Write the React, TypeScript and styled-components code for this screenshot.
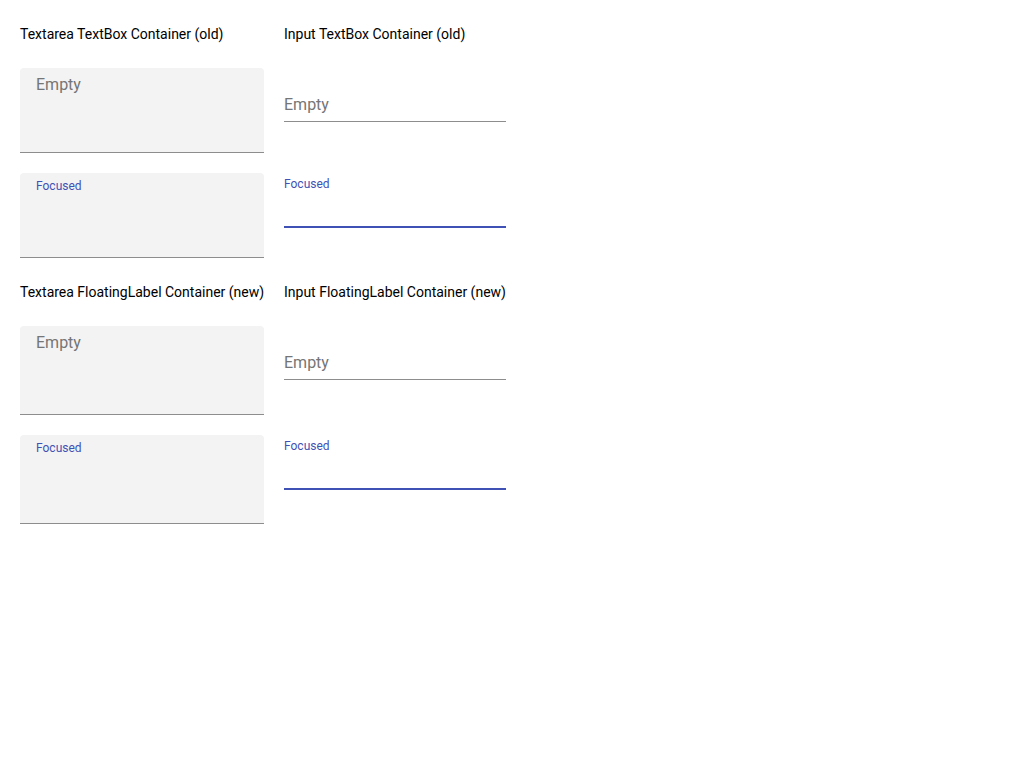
import React from "react";
import styled, { createGlobalStyle } from "styled-components";

const Global = createGlobalStyle`
  html, body { margin: 0; padding: 0; background: #fff; }
  body { font-family: Roboto, "Liberation Sans", Arial, sans-serif; }
  * { box-sizing: border-box; }
`;

const Page = styled.div`
  padding: 20px;
  display: grid;
  grid-template-columns: 244px 222px;
  column-gap: 20px;
  row-gap: 20px;
  align-items: start;
`;

const Title = styled.div`
  font-size: 14px;
  line-height: 20px;
  color: #000;
  white-space: nowrap;
  padding: 4px 0;
`;

const AreaBox = styled.div<{ $height: number }>`
  height: ${(p) => p.$height}px;
  background: #f3f3f3;
  border-radius: 4px 4px 0 0;
  border-bottom: 1px solid #8d8d8d;
  display: flex;
  flex-direction: column;
  padding: 0 16px;
`;

const AreaLabel = styled.label`
  display: block;
  padding-top: 6px;
  font-size: 12px;
  line-height: 15px;
  color: #3f51b5;
`;

const TextArea = styled.textarea`
  flex: 1;
  border: none;
  outline: none;
  resize: none;
  background: transparent;
  padding: 6px 0 0;
  margin: 0;
  font-family: Roboto, "Liberation Sans", Arial, sans-serif;
  font-size: 16px;
  line-height: 21px;
  color: #212121;
  &::placeholder { color: #757575; opacity: 1; }
`;

const InputField = styled.div`
  display: flex;
  flex-direction: column;
`;

const InputLabel = styled.label`
  display: block;
  height: 18px;
  padding-top: 5px;
  font-size: 12px;
  line-height: 13px;
  color: #3f51b5;
`;

const Input = styled.input<{ $focused: boolean }>`
  display: block;
  box-sizing: content-box;
  width: 100%;
  height: 20px;
  border: none;
  outline: none;
  background: transparent;
  margin: 0;
  padding: 9px 0 6px;
  font-family: Roboto, "Liberation Sans", Arial, sans-serif;
  font-size: 16px;
  line-height: 20px;
  color: #212121;
  border-bottom: ${(p) => (p.$focused ? "2px solid #3f51b5" : "1px solid #8d8d8d")};
  &::placeholder { color: #757575; opacity: 1; }
`;

function TextareaBox({ focused, height }: { focused: boolean; height: number }) {
  return (
    <AreaBox $height={height}>
      {focused && <AreaLabel>Focused</AreaLabel>}
      <TextArea placeholder={focused ? "" : "Empty"} />
    </AreaBox>
  );
}

function InputBox({ focused }: { focused: boolean }) {
  return (
    <InputField>
      <InputLabel>{focused ? "Focused" : ""}</InputLabel>
      <Input $focused={focused} placeholder={focused ? "" : "Empty"} />
    </InputField>
  );
}

export default function App() {
  return (
    <>
      <Global />
      <Page>
        <Title>Textarea TextBox Container (old)</Title>
        <Title>Input TextBox Container (old)</Title>
        <TextareaBox focused={false} height={85} />
        <InputBox focused={false} />
        <TextareaBox focused={true} height={85} />
        <InputBox focused={true} />
        <Title>Textarea FloatingLabel Container (new)</Title>
        <Title>Input FloatingLabel Container (new)</Title>
        <TextareaBox focused={false} height={89} />
        <InputBox focused={false} />
        <TextareaBox focused={true} height={89} />
        <InputBox focused={true} />
      </Page>
    </>
  );
}
